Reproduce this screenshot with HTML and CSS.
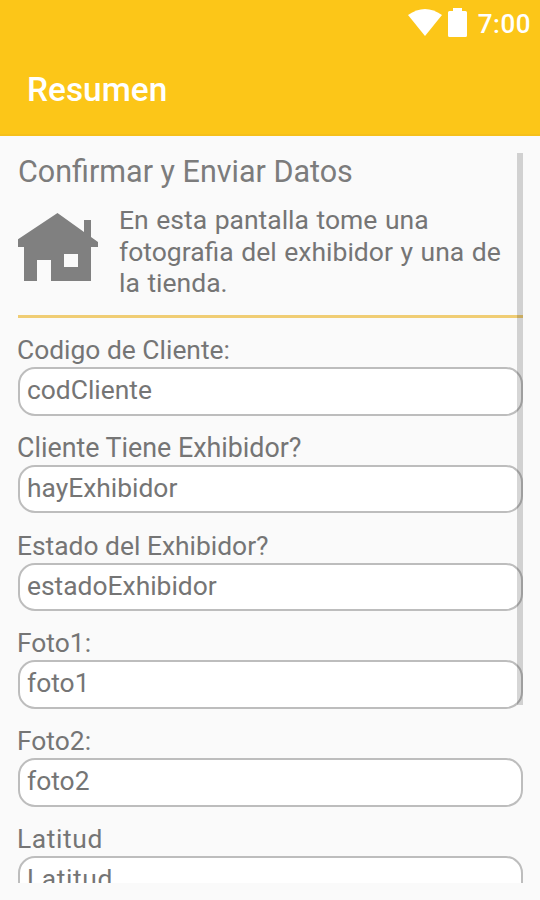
FILE: index.html
```html
<!DOCTYPE html>
<html lang="es">
	<head>
		<meta charset="UTF-8"/>
		<meta name="viewport" content="width=device-width, initial-scale=1.0"/>
		<title>Resumen</title>
		<link rel="stylesheet" href="styles.css">
	</head>
	<body>
		<header>
			<div class="status-bar">
				<svg class="wifi" width="34" height="27" viewBox="0 0 34 27"><path d="M0 6 Q17 -6 34 6 L17 27 Z" fill="#fff"/></svg>
				<svg class="battery" width="19" height="29" viewBox="0 0 19 29"><path d="M1.5 3 H5 V0 H14 V3 H17.5 Q19 3 19 4.5 V27.5 Q19 29 17.5 29 H1.5 Q0 29 0 27.5 V4.5 Q0 3 1.5 3 Z" fill="#fff"/></svg>
				<span class="clock">7:00</span>
			</div>
			<h1>Resumen</h1>
		</header>

		<main class="scroll-view">
			<h2>Confirmar y Enviar Datos</h2>
			<div class="intro">
				<svg class="house" width="81" height="69" viewBox="0 0 81 69"><path fill="#808080" fill-rule="evenodd" d="M40.5 0 L67 19 V7 H74 V24 L81 29 V34 H74 V68 H34 V47 H20 V68 H7 V34 H0 V27 Z M47 41 V54 H61 V41 Z"/></svg>
				<p>En esta pantalla tome una fotografia del exhibidor y una de la tienda.</p>
			</div>

			<div class="field"><label>Codigo de Cliente:</label><div class="box">codCliente</div></div>
			<div class="field"><label class="wide">Cliente Tiene Exhibidor?</label><div class="box">hayExhibidor</div></div>
			<div class="field"><label>Estado del Exhibidor?</label><div class="box">estadoExhibidor</div></div>
			<div class="field"><label>Foto1:</label><div class="box">foto1</div></div>
			<div class="field"><label>Foto2:</label><div class="box">foto2</div></div>
			<div class="field latitud"><label>Latitud</label><div class="box">Latitud</div></div>

			<div class="scrollbar"></div>
		</main>
	</body>
</html>
```

FILE: styles.css
```css
* {
	box-sizing: border-box;
}

body {
	margin: 0;
	height: 900px;
	overflow: hidden;
	background: #fafafa;
	color: #757575;
	font-family: Roboto, sans-serif;
	font-size: 26.4px;
}

header {
	height: 136px;
	background: #fcc618;
	color: #fff;
	border-bottom: 2px solid #f6c01a;
}

.status-bar {
	display: flex;
	justify-content: flex-end;
	height: 48px;
	padding: 8px 9px 0 0;
}

.wifi {
	margin: 1px 6px 0 0;
}

.battery {
	margin-right: 11px;
}

.clock {
	font-size: 26px;
	font-weight: 500;
	line-height: 32px;
	letter-spacing: 0.5px;
}

h1 {
	margin: 0;
	padding-left: 27px;
	font-size: 33.4px;
	font-weight: 500;
	line-height: 83px;
}

.scroll-view {
	position: relative;
	height: 730px;
	margin: 17px 17px 0 18px;
	overflow: hidden;
}

h2 {
	margin: 0;
	font-size: 30.5px;
	font-weight: 400;
	line-height: 37px;
	height: 36px;
	color: #7c7c7c;
}

.intro {
	display: flex;
	height: 129px;
	margin-bottom: 18px;
	padding-top: 15px;
	border-bottom: 3px solid #f0cd74;
}

.house {
	flex: none;
	margin: 9px 20px 0 -1px;
}

.intro p {
	margin: 0;
	padding: 0 16px 0 1px;
	line-height: 31.5px;
	font-size: 26.5px;
	word-spacing: 1px;
}

.field {
	height: 97.8px;
}

.field label {
	display: block;
	height: 31px;
	margin-left: -1px;
	line-height: 29px;
}

.field label.wide {
	font-size: 26.8px;
}

.box {
	height: 48.5px;
	padding-left: 7px;
	line-height: 43.5px;
	background: #fff;
	border: 2px solid #bdbdbd;
	border-radius: 17px;
}

.latitud {
	letter-spacing: 0.6px;
}

.scrollbar {
	position: absolute;
	top: 0;
	right: 0;
	width: 6px;
	height: 552px;
	background: rgba(0, 0, 0, 0.16);
}
```
